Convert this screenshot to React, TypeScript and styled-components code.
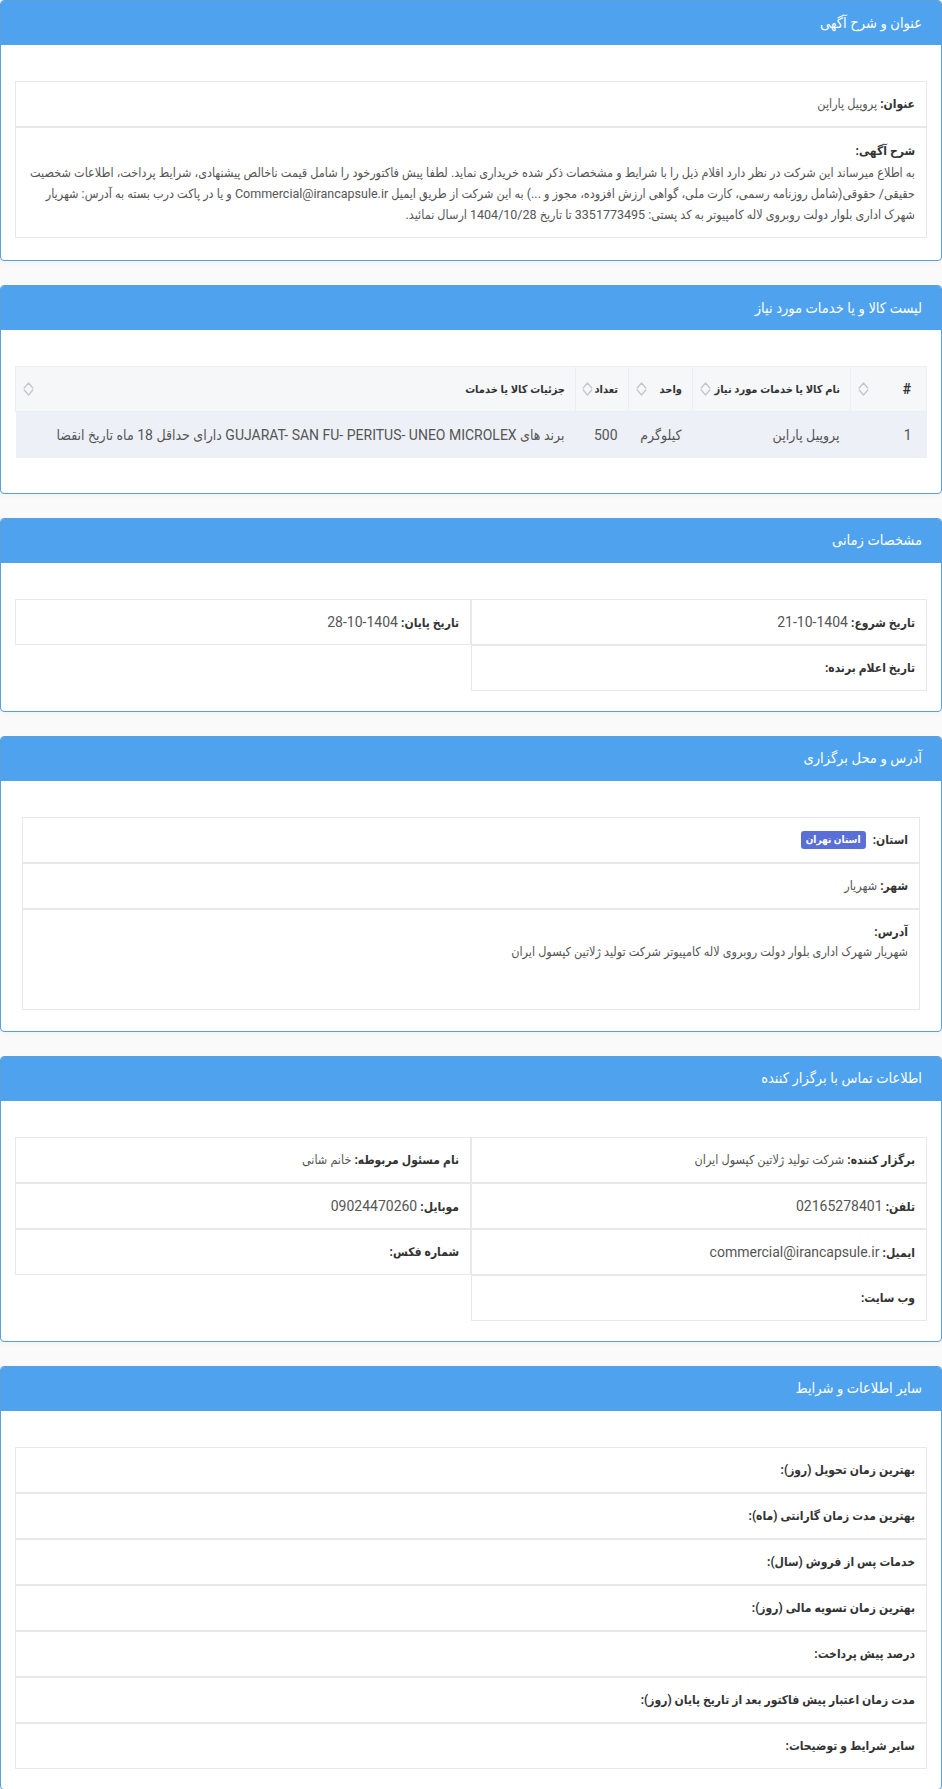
import React from 'react';
import styled, {createGlobalStyle} from 'styled-components';

const GlobalStyle = createGlobalStyle`
  html, body {
    margin: 0;
    padding: 0;
    background: #fafafa;
  }
  body {
    font-family: Roboto, "DejaVu Sans Condensed", "DejaVu Sans", sans-serif;
    color: #555;
    direction: rtl;
  }
  * { box-sizing: border-box; }
`;

const BLUE = '#4fa3ee';

function SortIcon() {
  return (
    <SortSvg width="11" height="16" viewBox="0 0 11 16" fill="none" stroke="#c2c6cc" strokeWidth="1.3" strokeLinejoin="round" strokeLinecap="round">
      <path d="M1.2 7 L5.5 2 L9.8 7" />
      <path d="M1.2 9 L5.5 14 L9.8 9" />
    </SortSvg>
  );
}

export default function App() {
  return (
    <Page>
      <GlobalStyle />

      <Card>
        <CardHeader>عنوان و شرح آگهی</CardHeader>
        <CardBody $bottom={22}>
          <Stack>
            <Field><Label>عنوان:</Label> پروپیل پاراپن</Field>
            <Field $multi $lineHeight={21} $size={12.5}>
              <Label>شرح آگهی:</Label>
              <br />
              به اطلاع میرساند این شرکت در نظر دارد اقلام ذیل را با شرایط و مشخصات ذکر شده خریداری نماید. لطفا پیش فاکتورخود را شامل قیمت ناخالص پیشنهادی، شرایط پرداخت، اطلاعات شخصیت حقیقی/ حقوقی(شامل روزنامه رسمی، کارت ملی، گواهی ارزش افزوده، مجوز و ...) به این شرکت از طریق ایمیل Commercial@irancapsule.ir و یا در پاکت درب بسته به آدرس: شهریار شهرک اداری بلوار دولت روبروی لاله کامپیوتر به کد پستی: 3351773495 تا تاریخ 1404/10/28 ارسال نمائید.
            </Field>
          </Stack>
        </CardBody>
      </Card>

      <Card>
        <CardHeader>لیست کالا و یا خدمات مورد نیاز</CardHeader>
        <CardBody $bottom={35}>
          <Table>
            <colgroup>
              <col style={{width: 76}} />
              <col style={{width: 158}} />
              <col style={{width: 64}} />
              <col style={{width: 53}} />
              <col />
            </colgroup>
            <thead>
              <tr>
                {['#', 'نام کالا یا خدمات مورد نیاز', 'واحد', 'تعداد', 'جزئیات کالا یا خدمات'].map((h, i) => (
                  <Th key={i} $first={i === 0}>
                    <ThInner>
                      <ThText $big={i === 0}>{h}</ThText>
                      <SortIcon />
                    </ThInner>
                  </Th>
                ))}
              </tr>
            </thead>
            <tbody>
              <tr>
                <Td $first>1</Td>
                <Td>پروپیل پاراپن</Td>
                <Td>کیلوگرم</Td>
                <Td>500</Td>
                <Td>برند های GUJARAT- SAN FU- PERITUS- UNEO MICROLEX دارای حداقل 18 ماه تاریخ انقضا</Td>
              </tr>
            </tbody>
          </Table>
        </CardBody>
      </Card>

      <Card>
        <CardHeader>مشخصات زمانی</CardHeader>
        <CardBody $bottom={20}>
          <Grid>
            <Field><Label>تاریخ شروع:</Label> <Value>1404-10-21</Value></Field>
            <Field><Label>تاریخ پایان:</Label> <Value>1404-10-28</Value></Field>
            <Field><Label>تاریخ اعلام برنده:</Label></Field>
          </Grid>
        </CardBody>
      </Card>

      <Card>
        <CardHeader>آدرس و محل برگزاری</CardHeader>
        <CardBody $inset $bottom={21}>
          <Stack>
            <Field><Label>استان:</Label> <Badge>استان تهران</Badge></Field>
            <Field><Label>شهر:</Label> شهریار</Field>
            <Field $multi $minHeight={101}>
              <Label>آدرس:</Label>
              <br />
              شهریار شهرک اداری بلوار دولت روبروی لاله کامپیوتر شرکت تولید ژلاتین کپسول ایران
            </Field>
          </Stack>
        </CardBody>
      </Card>

      <Card>
        <CardHeader>اطلاعات تماس با برگزار کننده</CardHeader>
        <CardBody $bottom={20}>
          <Grid>
            <Field><Label>برگزار کننده:</Label> شرکت تولید ژلاتین کپسول ایران</Field>
            <Field><Label>نام مسئول مربوطه:</Label> خانم شانی</Field>
            <Field><Label>تلفن:</Label> <Value>02165278401</Value></Field>
            <Field><Label>موبایل:</Label> <Value>09024470260</Value></Field>
            <Field><Label>ایمیل:</Label> <Value>commercial@irancapsule.ir</Value></Field>
            <Field><Label>شماره فکس:</Label></Field>
            <Field><Label>وب سایت:</Label></Field>
          </Grid>
        </CardBody>
      </Card>

      <Card>
        <CardHeader>سایر اطلاعات و شرایط</CardHeader>
        <CardBody $bottom={20}>
          <Stack>
            <Field><Label>بهترین زمان تحویل (روز):</Label></Field>
            <Field><Label>بهترین مدت زمان گارانتی (ماه):</Label></Field>
            <Field><Label>خدمات پس از فروش (سال):</Label></Field>
            <Field><Label>بهترین زمان تسویه مالی (روز):</Label></Field>
            <Field><Label>درصد پیش پرداخت:</Label></Field>
            <Field><Label>مدت زمان اعتبار پیش فاکتور بعد از تاریخ پایان (روز):</Label></Field>
            <Field><Label>سایر شرایط و توضیحات:</Label></Field>
          </Stack>
        </CardBody>
      </Card>
    </Page>
  );
}

const Page = styled.div`
  display: flex;
  flex-direction: column;
  gap: 24px;
  direction: rtl;
`;

const Card = styled.section`
  background: #fff;
  border: 1px solid #5b9fdb;
  border-radius: 4px;
  overflow: hidden;
  box-shadow: 0 2px 6px rgba(0, 0, 0, 0.03);
`;

const CardHeader = styled.div`
  height: 44px;
  display: flex;
  align-items: center;
  padding: 0 19px;
  background: ${BLUE};
  color: #fff;
  font-size: 14.5px;
  font-weight: 400;
`;

const CardBody = styled.div<{$inset?: boolean; $bottom?: number}>`
  padding: 36px ${p => (p.$inset ? 21 : 14)}px ${p => p.$bottom ?? 21}px;
`;

const Stack = styled.div`
  display: flex;
  flex-direction: column;
`;

const Grid = styled.div`
  display: grid;
  grid-template-columns: 1fr 1fr;
`;

const Field = styled.div<{$multi?: boolean; $minHeight?: number; $lineHeight?: number; $size?: number}>`
  border: 1px solid #e8e8e8;
  padding: 12px 11px;
  font-size: ${p => p.$size ?? 12.5}px;
  line-height: ${p => p.$lineHeight ?? 20}px;
  color: #555;
  height: ${p => (p.$multi ? 'auto' : '46px')};
  min-height: ${p => p.$minHeight ?? 0}px;
  white-space: ${p => (p.$multi ? 'normal' : 'nowrap')};
`;

const Label = styled.b`
  color: #333;
  font-weight: 700;
  font-size: 12px;
`;

const Value = styled.span`
  font-size: 14px;
`;

const Badge = styled.span`
  display: inline-block;
  margin-right: 4px;
  padding: 0 5px;
  height: 18px;
  line-height: 18px;
  border-radius: 3px;
  background: #5a6fd6;
  color: #fff;
  font-size: 10px;
  font-weight: 700;
  vertical-align: middle;
`;

const Table = styled.table`
  width: 100%;
  border-collapse: collapse;
  table-layout: fixed;
`;

const Th = styled.th<{$first?: boolean}>`
  height: 45px;
  padding: 0 ${p => (p.$first ? 15 : 10)}px 0 7px;
  background: #f6f7f9;
  border: 1px solid #eceef1;
  text-align: right;
  color: #333;
  font-size: 12px;
  font-weight: 700;
`;

const ThInner = styled.div`
  display: flex;
  align-items: center;
  justify-content: space-between;
  gap: 2px;
`;

const ThText = styled.span<{$big?: boolean}>`
  font-size: ${p => (p.$big ? 14 : 11)}px;
  white-space: nowrap;
`;

const SortSvg = styled.svg`
  flex-shrink: 0;
`;

const Td = styled.td<{$first?: boolean}>`
  height: 46px;
  padding: 0 ${p => (p.$first ? 15 : 11)}px 0 8px;
  background: #edf1f7;
  text-align: right;
  font-size: 14px;
  color: #555;
  white-space: nowrap;
  overflow: hidden;
`;
